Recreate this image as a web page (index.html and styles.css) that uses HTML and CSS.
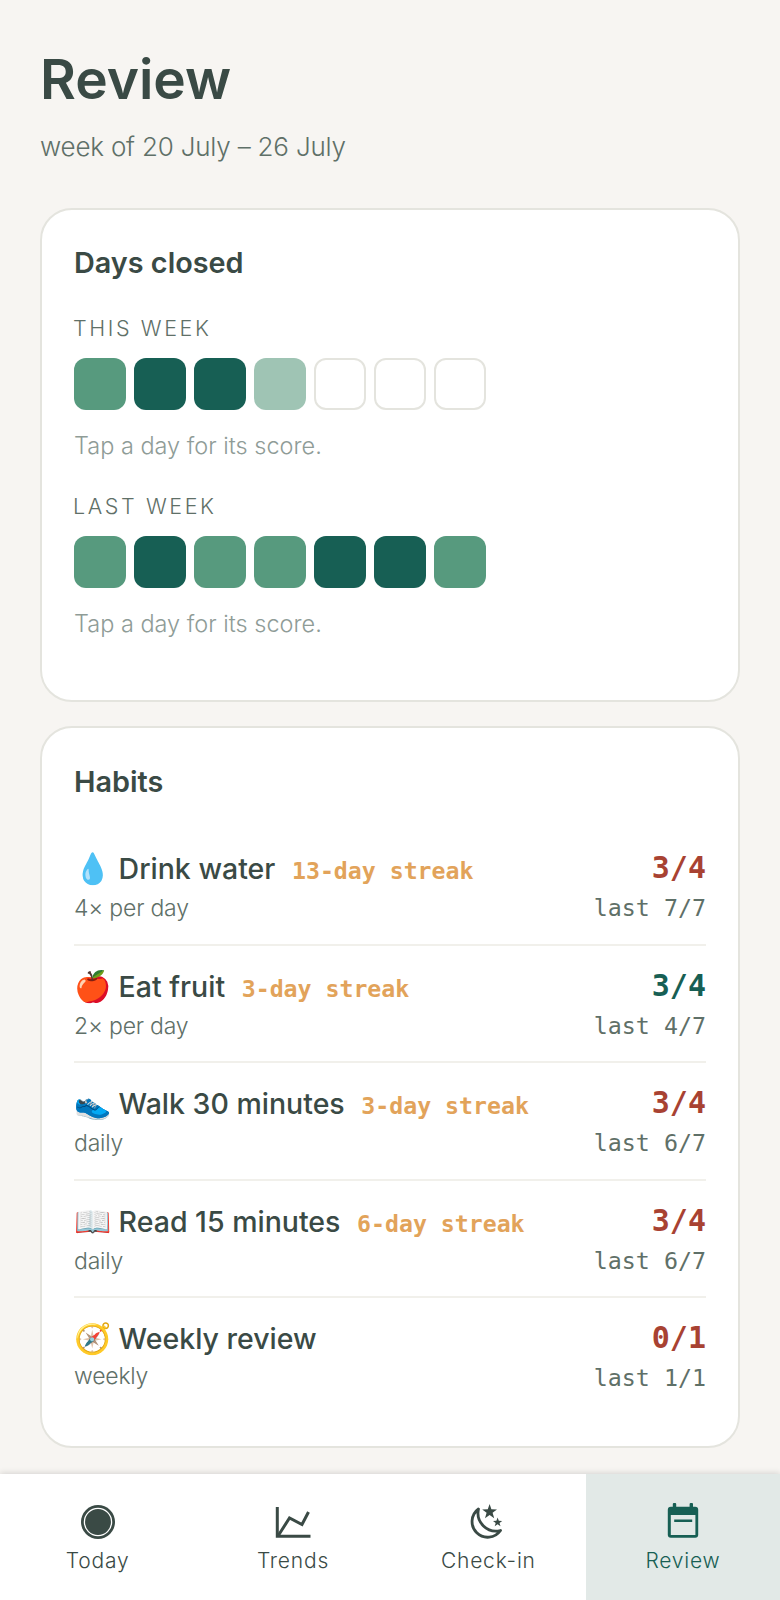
FILE: index.html
```html
<!DOCTYPE html>
<html lang="en">
<head>
    <meta charset="UTF-8">
    <meta name="viewport" content="width=device-width, initial-scale=1.0">
    <title>Review</title>
    <link rel="stylesheet" href="styles.css">
</head>
<body>

    <main class="page">
        <h1 class="page-title">Review</h1>
        <p class="page-sub">week of 20 July – 26 July</p>

        <section class="card days-card">
            <h2 class="card-title">Days closed</h2>

            <div class="week-label">THIS WEEK</div>
            <div class="week-row">
                <span class="day day-mid"></span>
                <span class="day day-full"></span>
                <span class="day day-full"></span>
                <span class="day day-low"></span>
                <span class="day day-empty"></span>
                <span class="day day-empty"></span>
                <span class="day day-empty"></span>
            </div>
            <p class="week-note">Tap a day for its score.</p>

            <div class="week-label">LAST WEEK</div>
            <div class="week-row">
                <span class="day day-mid"></span>
                <span class="day day-full"></span>
                <span class="day day-mid"></span>
                <span class="day day-mid"></span>
                <span class="day day-full"></span>
                <span class="day day-full"></span>
                <span class="day day-mid"></span>
            </div>
            <p class="week-note">Tap a day for its score.</p>
        </section>

        <section class="card habits-card">
            <h2 class="card-title">Habits</h2>

            <div class="habit">
                <div class="habit-main">
                    <div class="habit-name"><span class="emoji">💧</span> Drink water <span class="streak">13-day streak</span></div>
                    <div class="habit-freq">4× per day</div>
                </div>
                <div class="habit-score">
                    <div class="score score-low">3/4</div>
                    <div class="last">last 7/7</div>
                </div>
            </div>

            <div class="habit">
                <div class="habit-main">
                    <div class="habit-name"><span class="emoji">🍎</span> Eat fruit <span class="streak">3-day streak</span></div>
                    <div class="habit-freq">2× per day</div>
                </div>
                <div class="habit-score">
                    <div class="score score-ok">3/4</div>
                    <div class="last">last 4/7</div>
                </div>
            </div>

            <div class="habit">
                <div class="habit-main">
                    <div class="habit-name"><span class="emoji">👟</span> Walk 30 minutes <span class="streak">3-day streak</span></div>
                    <div class="habit-freq">daily</div>
                </div>
                <div class="habit-score">
                    <div class="score score-low">3/4</div>
                    <div class="last">last 6/7</div>
                </div>
            </div>

            <div class="habit">
                <div class="habit-main">
                    <div class="habit-name"><span class="emoji">📖</span> Read 15 minutes <span class="streak">6-day streak</span></div>
                    <div class="habit-freq">daily</div>
                </div>
                <div class="habit-score">
                    <div class="score score-low">3/4</div>
                    <div class="last">last 6/7</div>
                </div>
            </div>

            <div class="habit">
                <div class="habit-main">
                    <div class="habit-name"><span class="emoji">🧭</span> Weekly review</div>
                    <div class="habit-freq">weekly</div>
                </div>
                <div class="habit-score">
                    <div class="score score-low">0/1</div>
                    <div class="last">last 1/1</div>
                </div>
            </div>
        </section>
    </main>

    <nav class="tabbar">
        <div class="tab">
            <svg class="tab-icon" viewBox="0 0 40 40">
                <circle cx="20" cy="20" r="17" fill="#3a4a45"/>
                <circle cx="20" cy="20" r="13.6" fill="none" stroke="#fff" stroke-width="1.3"/>
            </svg>
            <span>Today</span>
        </div>
        <div class="tab">
            <svg class="tab-icon" viewBox="0 0 40 40">
                <path d="M4.3 5V34.2H37.5" fill="none" stroke="#3a4a45" stroke-width="3"/>
                <path d="M5 34L16.5 16L29 22.5L35.5 10" fill="none" stroke="#3a4a45" stroke-width="3"/>
            </svg>
            <span>Trends</span>
        </div>
        <div class="tab">
            <svg class="tab-icon" viewBox="0 0 40 40">
                <path d="M10.5 7A15.6 15.6 0 1 0 32.5 28.5A18 18 0 0 1 10.5 7Z" fill="none" stroke="#3a4a45" stroke-width="2.8" stroke-linejoin="round"/>
                <path d="M21.6 2L23.4 7.2L29 7.4L24.6 10.8L26.2 16.2L21.6 13L17 16.2L18.6 10.8L14.2 7.4L19.8 7.2Z" fill="#3a4a45"/>
                <path d="M29.6 15.5L30.8 18.7L34.2 18.9L31.5 21L32.5 24.2L29.6 22.3L26.7 24.2L27.7 21L25 18.9L28.4 18.7Z" fill="#3a4a45"/>
            </svg>
            <span>Check-in</span>
        </div>
        <div class="tab tab-active">
            <svg class="tab-icon" viewBox="0 0 40 40">
                <rect x="9.8" y="1" width="3.4" height="6" rx="1" fill="#175f54"/>
                <rect x="26.6" y="1" width="3.4" height="6" rx="1" fill="#175f54"/>
                <rect x="4.8" y="4.7" width="30.4" height="31" rx="3" fill="#175f54"/>
                <rect x="7.8" y="13" width="24.6" height="20" fill="#e2e9e7"/>
                <rect x="11.2" y="17.5" width="18" height="2.5" fill="#175f54"/>
            </svg>
            <span>Review</span>
        </div>
    </nav>

</body>
</html>
```

FILE: styles.css
```css
* {
    box-sizing: border-box;
}
html, body {
    margin: 0;
    height: 100%;
}
body {
    display: flex;
    flex-direction: column;
    height: 100vh;
    overflow: hidden;
    font-family: Inter, "Noto Sans", sans-serif;
    color: #3a4a45;
    background-color: #f7f5f2;
}
.page {
    flex: 1;
    min-height: 0;
    padding: 44px 40px 0;
}
.page-title {
    margin: 0;
    font-size: 55px;
    line-height: 70px;
    font-weight: 600;
}
.page-sub {
    margin: 15px 0 0;
    font-size: 26px;
    line-height: 36px;
    letter-spacing: -0.2px;
    font-weight: 300;
    color: #5f7068;
}
.card {
    background-color: white;
    border: 2px solid #e4e4de;
    border-radius: 32px;
    padding: 32px;
}
.days-card {
    height: 494px;
    margin-top: 43px;
    padding-top: 33px;
}
.habits-card {
    height: 722px;
    margin-top: 24px;
    padding-top: 34px;
}
.card-title {
    margin: 0;
    font-size: 28.8px;
    line-height: 40px;
    font-weight: 600;
}
.week-label {
    margin-top: 30px;
    margin-left: -1px;
    font-size: 21.5px;
    line-height: 30px;
    letter-spacing: 2.6px;
    font-weight: 300;
    color: #5f7068;
}
.week-row {
    display: flex;
    gap: 8px;
    margin-top: 15px;
}
.day {
    width: 52px;
    height: 52px;
    border-radius: 12px;
}
.day-full {
    background-color: #175f54;
}
.day-mid {
    background-color: #579a7e;
}
.day-low {
    background-color: #9fc4b4;
}
.day-empty {
    border: 2px solid #e4e4de;
}
.week-note {
    margin: 20px 0 0;
    font-size: 23.5px;
    line-height: 32px;
    font-weight: 300;
    color: #8f9c97;
}
.week-note + .week-label {
    margin-top: 29px;
}
.habit {
    display: flex;
    justify-content: space-between;
    height: 117.5px;
    padding-top: 20px;
    border-bottom: 2px solid #f1f0eb;
}
.habits-card .card-title {
    margin-bottom: 26px;
}
.habit:last-child {
    border-bottom: none;
}
.habit-name {
    font-size: 28.5px;
    line-height: 40px;
    font-weight: 500;
}
.emoji {
    font-size: 30px;
}
.streak {
    margin-left: 9px;
    font-family: "DejaVu Sans Mono", monospace;
    font-size: 23.2px;
    font-weight: 700;
    color: #e2a35a;
}
.habit-freq {
    margin-top: 1px;
    font-size: 23px;
    line-height: 33px;
    letter-spacing: -0.2px;
    font-weight: 300;
    color: #5f7068;
}
.habit-score {
    text-align: right;
}
.score {
    font-family: "DejaVu Sans Mono", monospace;
    font-size: 30px;
    line-height: 40px;
    font-weight: 700;
}
.score-low {
    color: #a84232;
}
.score-ok {
    color: #175f54;
}
.last {
    margin-top: 3px;
    font-family: "DejaVu Sans Mono", monospace;
    font-size: 23.3px;
    line-height: 34px;
    color: #5f7068;
}
.tabbar {
    display: grid;
    grid-template-columns: repeat(3, 1fr) 194px;
    height: 126px;
    background-color: white;
    box-shadow: 0 -1px 6px rgba(0, 0, 0, 0.14);
}
.tab {
    display: flex;
    flex-direction: column;
    align-items: center;
    padding-top: 28px;
    font-size: 21px;
    line-height: 32px;
    letter-spacing: 0.8px;
    font-weight: 300;
}
.tab-icon {
    width: 40px;
    height: 40px;
    margin-bottom: 3px;
}
.tab-active {
    background-color: #e2e9e7;
    color: #175f54;
}
```
